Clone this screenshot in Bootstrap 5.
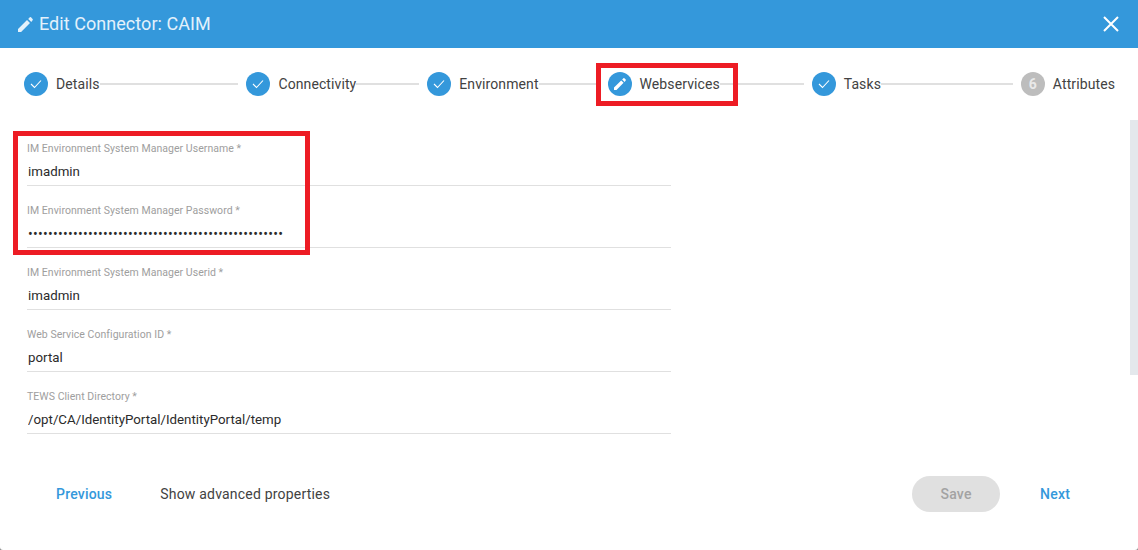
<!DOCTYPE html>
<html lang="en">
<head>
<meta charset="utf-8">
<title>Edit Connector</title>
<link href="https://cdn.jsdelivr.net/npm/bootstrap@5.3.0/dist/css/bootstrap.min.css" rel="stylesheet">
<style>
html,body{height:100%;margin:0;overflow:hidden}
body{font-family:Roboto,"Liberation Sans",sans-serif;color:#424242;background:#8a8a8a}
.dlg{height:550px;background:#fff;border-radius:0 0 3px 3px}
.dlg-head{height:48px;background:#3498db;color:#e3f1fb;padding:0 18px}
.dlg-title{font-size:18px;font-weight:400;margin:0;line-height:48px;letter-spacing:.05px;gap:6px}
.dlg-close{background:none;border:0;padding:0;width:18px;height:18px;line-height:0}
.stepper{height:72px;padding:0 23px 0 24px}
.stp{font-size:14px;letter-spacing:.1px;white-space:nowrap}
.stp-ic{width:24px;height:24px;border-radius:50%;background:#3498db;color:#fff;margin-right:8px;flex:none;font-size:14px;font-weight:700}
.stp-ic.off{background:#bdbdbd;color:#e9e9e9}
.stp-line{flex:1 1 0;height:2px;background:#e0e0e0;margin:0 8px 0 0}
.w139{flex-grow:139}.w63{flex-grow:63}.w61{flex-grow:61}.w84{flex-grow:84}.w132{flex-grow:132}
.frame{position:absolute;border:5px solid #ed1c24;pointer-events:none}
.f1{left:596px;top:63px;width:142px;height:43px}
.f2{left:13px;top:131px;width:297px;height:124px}
.scroller{height:324px;overflow:hidden;padding-left:27px}
.track{position:absolute;right:0;top:120px;width:8px;height:255px;background:#e4e8ec}
.fld{width:644px;height:62px;border-bottom:1px solid #e0e0e0;padding-top:19px}
.fld:first-child{height:66px;padding-top:23px}
.fld-lab{display:block;font-size:10.5px;line-height:12px;color:#9e9e9e;letter-spacing:.05px;margin:0}
.fld-inp{display:block;width:100%;border:0;outline:0;padding:0 0 0 1px;background:transparent;font-family:inherit;font-size:13.3px;line-height:20px;height:20px;margin-top:7px;color:#2b2b2b}
.fld-inp.pw{font-size:14px;letter-spacing:.28px}
.dlg-foot{height:106px;padding:32px 68px 0 56px}
.act{font-size:14px;font-weight:500;color:#3498db;letter-spacing:.2px;background:none;border:0;padding:0;height:36px}
.adv{font-size:14px;color:#424242;letter-spacing:.2px;background:none;border:0;padding:0;margin-left:48px;height:36px}
.save{width:88px;height:36px;border-radius:18px;background:#e0e0e0;color:#a3a3a3;font-size:14px;font-weight:500;border:0;padding:0;margin-right:40px;letter-spacing:.2px}
</style>
</head>
<body>
<div class="dlg position-relative d-flex flex-column">
  <header class="dlg-head d-flex align-items-center justify-content-between">
    <h1 class="dlg-title d-flex align-items-center">
      <svg width="15" height="15" viewBox="0 0 15 15" aria-hidden="true"><path fill="#e3f1fb" d="M0 11.9V15h3.1l8.9-9-3-3zM14.6 3.2a.9.9 0 0 0 0-1.2L13 .3a.9.9 0 0 0-1.2 0l-1.6 1.6 3.1 3.1z"/></svg>
      <span>Edit Connector: CAIM</span>
    </h1>
    <button class="dlg-close" type="button" aria-label="Close">
      <svg width="16" height="16" viewBox="0 0 16 16"><path stroke="#fff" stroke-width="2" d="M1 1l14 14M15 1L1 15"/></svg>
    </button>
  </header>
  <nav class="stepper d-flex align-items-center">
    <div class="stp d-flex align-items-center"><span class="stp-ic d-flex align-items-center justify-content-center"><svg width="12" height="10" viewBox="0 0 12 10"><path fill="none" stroke="#fff" stroke-width="1.1" d="M1 5l3.5 3.5L11 1.5"/></svg></span>Details</div>
    <div class="stp-line w139"></div>
    <div class="stp d-flex align-items-center"><span class="stp-ic d-flex align-items-center justify-content-center"><svg width="12" height="10" viewBox="0 0 12 10"><path fill="none" stroke="#fff" stroke-width="1.1" d="M1 5l3.5 3.5L11 1.5"/></svg></span>Connectivity</div>
    <div class="stp-line w63"></div>
    <div class="stp d-flex align-items-center"><span class="stp-ic d-flex align-items-center justify-content-center"><svg width="12" height="10" viewBox="0 0 12 10"><path fill="none" stroke="#fff" stroke-width="1.1" d="M1 5l3.5 3.5L11 1.5"/></svg></span>Environment</div>
    <div class="stp-line w61"></div>
    <div class="stp d-flex align-items-center"><span class="stp-ic d-flex align-items-center justify-content-center"><svg width="12" height="12" viewBox="0 0 15 15"><path fill="#fff" d="M0 11.9V15h3.1l8.9-9-3-3zM14.6 3.2a.9.9 0 0 0 0-1.2L13 .3a.9.9 0 0 0-1.2 0l-1.6 1.6 3.1 3.1z"/></svg></span>Webservices</div>
    <div class="stp-line w84"></div>
    <div class="stp d-flex align-items-center"><span class="stp-ic d-flex align-items-center justify-content-center"><svg width="12" height="10" viewBox="0 0 12 10"><path fill="none" stroke="#fff" stroke-width="1.1" d="M1 5l3.5 3.5L11 1.5"/></svg></span>Tasks</div>
    <div class="stp-line w132"></div>
    <div class="stp d-flex align-items-center"><span class="stp-ic off d-flex align-items-center justify-content-center">6</span>Attributes</div>
  </nav>
  <main class="scroller">
    <div class="fld"><label class="fld-lab">IM Environment System Manager Username *</label><input class="fld-inp" value="imadmin"></div>
    <div class="fld"><label class="fld-lab">IM Environment System Manager Password *</label><input class="fld-inp pw" type="password" value="imadminimadminimadminimadminimadminimadminimadminim"></div>
    <div class="fld"><label class="fld-lab">IM Environment System Manager Userid *</label><input class="fld-inp" value="imadmin"></div>
    <div class="fld"><label class="fld-lab">Web Service Configuration ID *</label><input class="fld-inp" value="portal"></div>
    <div class="fld"><label class="fld-lab">TEWS Client Directory *</label><input class="fld-inp" value="/opt/CA/IdentityPortal/IdentityPortal/temp"></div>
  </main>
  <footer class="dlg-foot d-flex align-items-start">
    <button class="act" type="button">Previous</button>
    <button class="adv" type="button">Show advanced properties</button>
    <button class="save ms-auto" type="button" disabled>Save</button>
    <button class="act" type="button">Next</button>
  </footer>
  <div class="track"></div>
  <div class="frame f1"></div>
  <div class="frame f2"></div>
</div>
<script src="https://cdn.jsdelivr.net/npm/bootstrap@5.3.0/dist/js/bootstrap.bundle.min.js"></script>
</body>
</html>
